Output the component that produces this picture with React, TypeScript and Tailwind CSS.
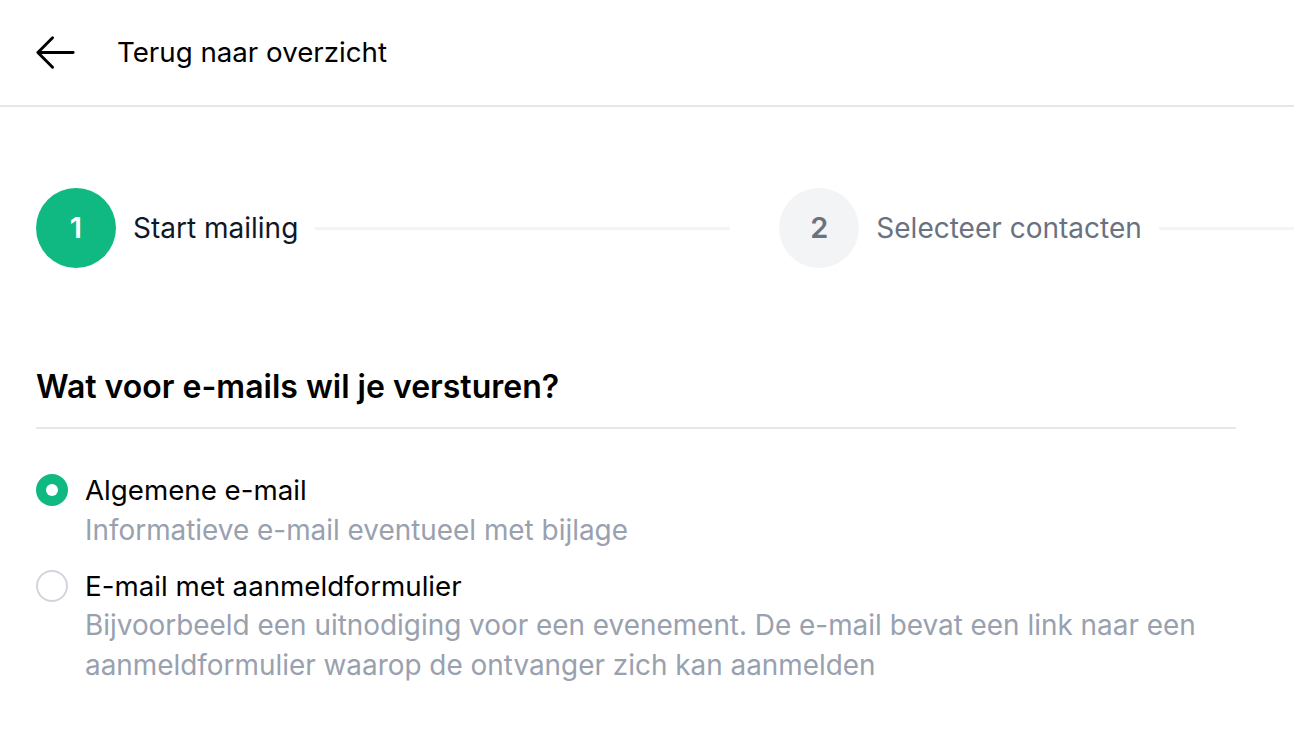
export default function App() {
  return (
    <div className="min-h-screen w-full overflow-hidden bg-white font-['Inter',sans-serif] text-black">
      <header className="flex h-[107px] items-center border-b-2 border-gray-200 pl-[32px]">
        <svg className="h-[47px] w-[47px]" viewBox="0 0 24 24" fill="none" stroke="currentColor" strokeWidth={1.5}>
          <path strokeLinecap="round" strokeLinejoin="round" d="M10.5 19.5 3 12m0 0 7.5-7.5M3 12h18" />
        </svg>
        <span className="ml-[38px] text-[27.7px] leading-[39px]">Terug naar overzicht</span>
      </header>

      <main className="pl-[36px]">
        <div className="mt-[81px] flex w-[1600px] items-center">
          <div className="flex h-[80px] w-[80px] shrink-0 items-center justify-center rounded-full bg-[#10b981] text-[29px] font-semibold text-white">
            1
          </div>
          <span className="ml-[17px] shrink-0 whitespace-nowrap text-[28px] leading-[40px] text-gray-900">Start mailing</span>
          <div className="ml-[17px] h-[3px] w-[415px] shrink-0 bg-gray-100" />
          <div className="ml-[49px] flex h-[80px] w-[80px] shrink-0 items-center justify-center rounded-full bg-gray-100 text-[29px] font-semibold text-gray-500">
            2
          </div>
          <span className="ml-[17px] shrink-0 whitespace-nowrap text-[28px] leading-[40px] text-gray-500">Selecteer contacten</span>
          <div className="ml-[17px] h-[3px] w-[415px] shrink-0 bg-gray-100" />
        </div>

        <div className="mt-[97px] w-[1200px]">
          <h2 className="border-b-2 border-gray-200 pb-[18px] text-[32px] font-semibold leading-[44px]">
            Wat voor e-mails wil je versturen?
          </h2>

          <div className="mt-[41px] flex flex-col gap-[16px]">
            <label className="flex items-start">
              <span className="mt-[4px] flex h-[32px] w-[32px] shrink-0 items-center justify-center rounded-full bg-[#10b981]">
                <span className="h-[12px] w-[12px] rounded-full bg-white" />
              </span>
              <span className="ml-[17px] flex flex-col text-[27.7px] leading-[40px]">
                <span>Algemene e-mail</span>
                <span className="text-[27.9px] text-gray-400">Informatieve e-mail eventueel met bijlage</span>
              </span>
            </label>
            <label className="flex items-start">
              <span className="mt-[4px] h-[32px] w-[32px] shrink-0 rounded-full border-2 border-gray-300 bg-white" />
              <span className="ml-[17px] flex flex-col text-[27.7px] leading-[40px]">
                <span>E-mail met aanmeldformulier</span>
                <span className="text-[27.9px] leading-[39.5px] text-gray-400">
                  Bijvoorbeeld een uitnodiging voor een evenement. De e-mail bevat een link naar een aanmeldformulier waarop de ontvanger zich kan aanmelden
                </span>
              </span>
            </label>
          </div>
        </div>
      </main>
    </div>
  );
}
